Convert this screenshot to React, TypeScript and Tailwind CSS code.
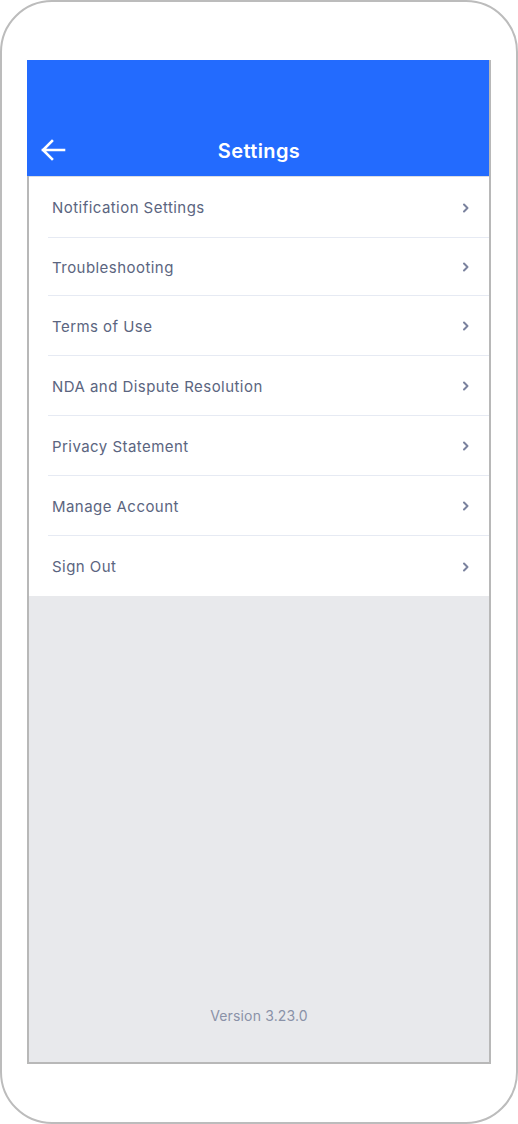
import React from "react";

const items = [
  { label: "Notification Settings", h: "h-[61px]" },
  { label: "Troubleshooting", h: "h-[58px]" },
  { label: "Terms of Use", h: "h-[60px]" },
  { label: "NDA and Dispute Resolution", h: "h-[60px]" },
  { label: "Privacy Statement", h: "h-[60px]" },
  { label: "Manage Account", h: "h-[60px]" },
  { label: "Sign Out", h: "h-[60px]" },
];

function Chevron() {
  return (
    <svg width="10" height="12" viewBox="0 0 10 12" fill="none" className="-mt-[3px]">
      <path d="M3 2.5L6.5 6L3 9.5" stroke="#7a829e" strokeWidth="2" strokeLinecap="round" strokeLinejoin="round" />
    </svg>
  );
}

export default function App() {
  return (
    <div
      className="w-[518px] h-[1124px] bg-white flex flex-col"
      style={{ fontFamily: "Inter, 'Noto Sans', sans-serif" }}
    >
      <div className="w-[518px] h-[1124px] rounded-[52px] border-2 border-[#bcbcbc] pt-[58px] pl-[25px]">
        <div className="w-[464px] h-[1004px] border-x-2 border-b-2 border-[#b8b8b8] flex flex-col bg-[#e8e9ec]">
          <div className="-ml-[2px] w-[462px] h-[116px] bg-[#236bfe] flex items-end pb-[13px] relative shrink-0">
            <div className="absolute left-[13px] bottom-[14px]">
              <svg width="26" height="24" viewBox="0 0 26 24" fill="none">
                <path d="M24 12H3M12 3L3 12L12 21" stroke="white" strokeWidth="2.6" strokeLinecap="square" />
              </svg>
            </div>
            <div className="w-full pl-[2px] text-center text-white text-[20px] font-semibold leading-[24px] tracking-[0.4px]">Settings</div>
          </div>
          <div className="h-[1px] bg-[#dadde3] shrink-0" />
          <div className="bg-white flex flex-col">
            {items.map((it, i) => (
              <div key={it.label} className={`${it.h} ml-[19px] flex items-center justify-between pl-[4px] pr-[18px] pt-[4px] ${i < items.length - 1 ? "border-b border-[#e6eaf3]" : ""}`}>
                <span className="text-[15px] text-[#5b6580] tracking-[0.45px] -mt-[1px]">{it.label}</span>
                <Chevron />
              </div>
            ))}
          </div>
          <div className="flex-1 flex items-end justify-center pb-[36px]">
            <span className="text-[14px] text-[#8a92a8] tracking-[0.15px]">Version 3.23.0</span>
          </div>
        </div>
      </div>
    </div>
  );
}
